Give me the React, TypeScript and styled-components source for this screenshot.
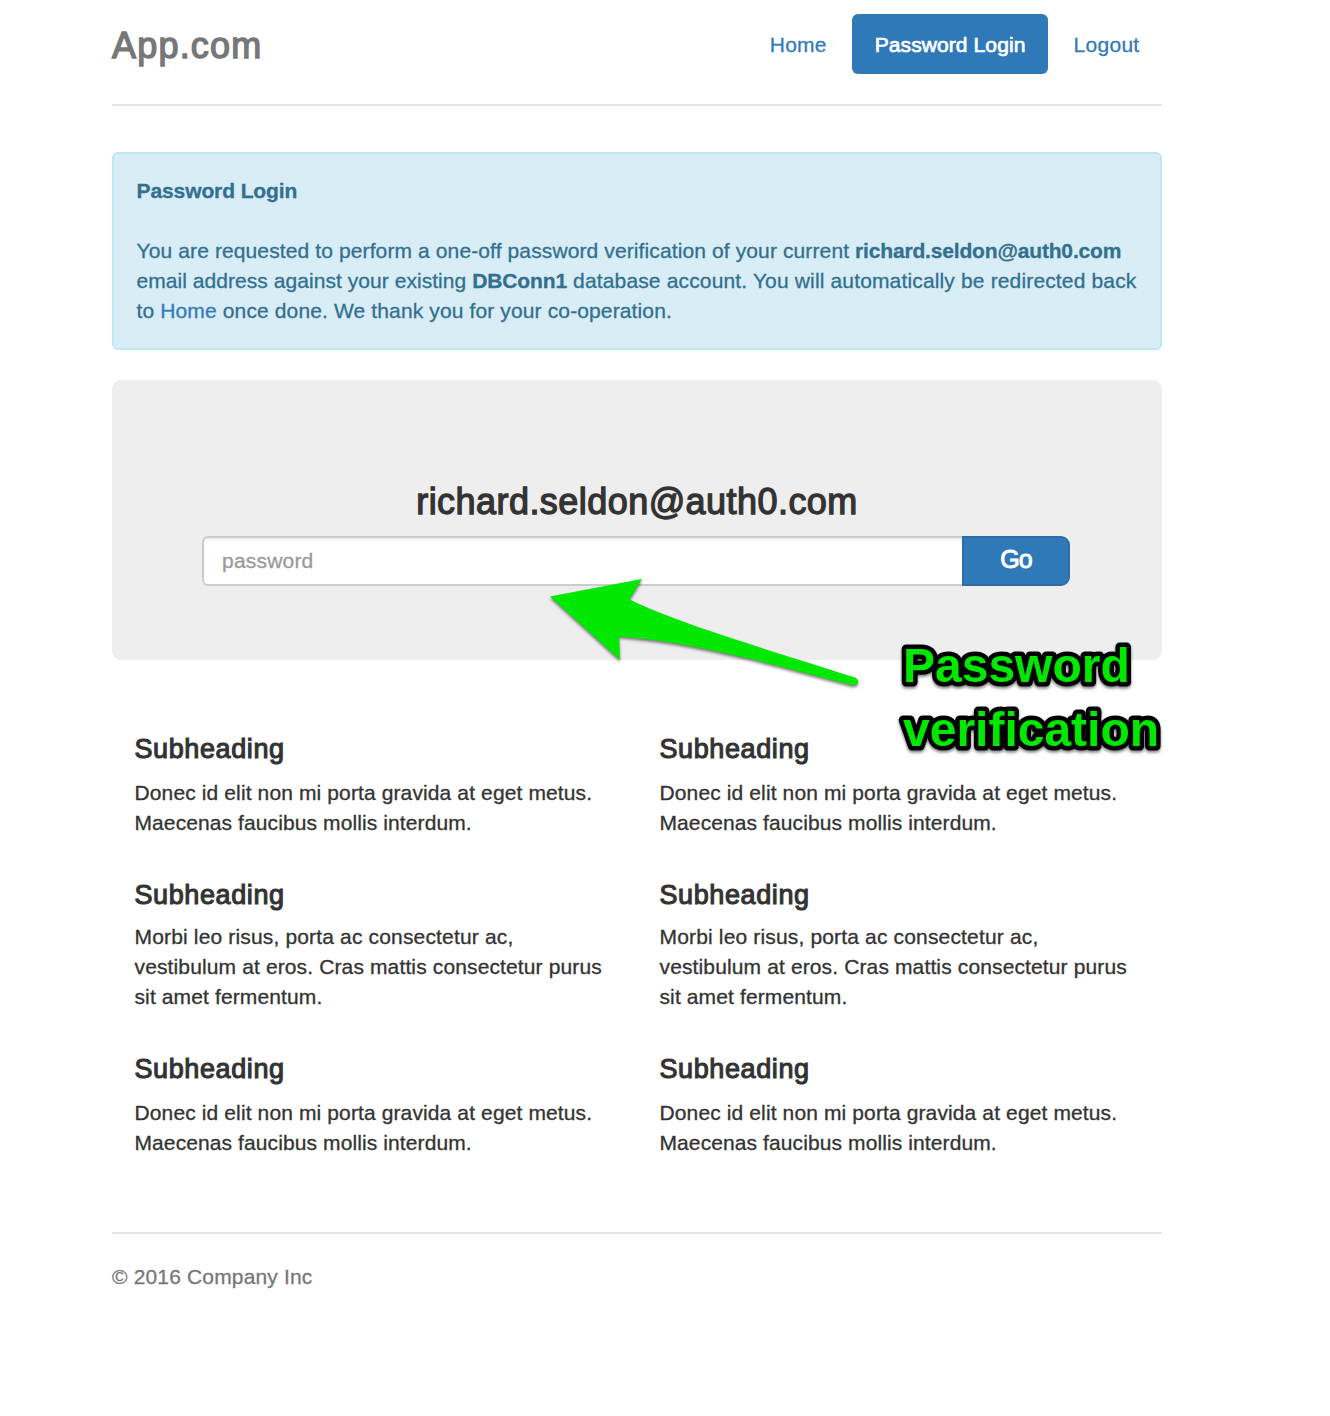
import React from "react";
import styled, { createGlobalStyle } from "styled-components";

const GlobalStyle = createGlobalStyle`
  *, *::before, *::after { box-sizing: border-box; }
  body {
    margin: 0;
    background: #fff;
    color: #333;
    font-family: "Liberation Sans", "Helvetica Neue", Helvetica, Arial, sans-serif;
    font-size: 21px;
    line-height: 30px;
  }
  a { text-decoration: none; }
`;

const Page = styled.div`
  position: relative;
  width: 1330px;
  height: 1416px;
  padding: 14px 168px 0 112px;
  overflow: hidden;
`;

const Header = styled.header`
  display: flex;
  justify-content: space-between;
  height: 92px;
  border-bottom: 2px solid #e5e5e5;
`;

const Brand = styled.h3`
  margin: 2px 0 0;
  height: 60px;
  font-size: 36px;
  line-height: 60px;
  font-weight: 400;
  letter-spacing: 1.2px;
  color: #777;
  -webkit-text-stroke: 1.4px #777;
`;

const Nav = styled.nav`
  display: flex;
  gap: 3px;
  height: 60px;
`;

const NavLink = styled.a<{ $active?: boolean; $spacing: number }>`
  padding: 16px 22.5px 14px;
  border-radius: 6px;
  white-space: nowrap;
  letter-spacing: ${(p) => p.$spacing}px;
  color: ${(p) => (p.$active ? "#fff" : "#337ab7")};
  background: ${(p) => (p.$active ? "#2f79b9" : "transparent")};
  -webkit-text-stroke: ${(p) => (p.$active ? "0.7px #fff" : "0.3px #337ab7")};
`;

const Alert = styled.section`
  height: 198px;
  margin-top: 46px;
  padding: 22px 22.5px;
  border: 2px solid #bce8f1;
  border-radius: 6px;
  background: #d9edf7;
  color: #31708f;
  -webkit-text-stroke: 0.3px;
`;

const Line = styled.div<{ $spacing?: number }>`
  height: 30px;
  white-space: nowrap;
  letter-spacing: ${(p) => p.$spacing ?? 0}px;
`;

const Run = styled.span<{ $spacing: number }>`
  letter-spacing: ${(p) => p.$spacing}px;
`;

const Strong = styled.strong<{ $spacing: number }>`
  letter-spacing: ${(p) => p.$spacing}px;
`;

const AlertTitle = styled.strong`
  display: block;
  margin-bottom: 30px;
  letter-spacing: -0.1px;
`;

const Link = styled.a`
  color: #337ab7;
  -webkit-text-stroke-color: #337ab7;
`;

const Jumbotron = styled.section`
  height: 280px;
  margin-top: 30px;
  padding: 102px 92px 0 90px;
  border-radius: 9px;
  background: #eee;
`;

const Account = styled.h3`
  margin: 0 0 14px;
  padding-left: 2px;
  font-size: 36px;
  line-height: 40px;
  font-weight: 400;
  letter-spacing: 0.45px;
  text-align: center;
  -webkit-text-stroke: 1.3px #333;
`;

const InputGroup = styled.form`
  display: flex;
  height: 50px;
`;

const PasswordInput = styled.input`
  flex: 1;
  min-width: 0;
  padding: 0 18px;
  border: 2px solid #ccc;
  border-right: 0;
  border-radius: 6px 0 0 6px;
  background: #fff;
  box-shadow: inset 0 2px 2px rgba(0, 0, 0, 0.075);
  font: inherit;
  letter-spacing: 0.2px;
  &::placeholder {
    color: #999;
    opacity: 1;
    -webkit-text-stroke: 0.3px #999;
  }
`;

const GoButton = styled.button`
  width: 108px;
  padding: 0 0 4px;
  border: 2px solid #2e6da4;
  border-radius: 0 9px 9px 0;
  background: #2f79b9;
  color: #fff;
  font-family: inherit;
  font-size: 25px;
  letter-spacing: -1px;
  -webkit-text-stroke: 0.9px #fff;
`;

const Marketing = styled.section`
  display: grid;
  grid-template-columns: 1fr 1fr;
  height: 512px;
  margin-top: 60px;
`;

const Column = styled.div`
  padding: 14px 0 0 22.5px;
`;

const Entry = styled.article<{ $gap: number }>`
  margin-bottom: ${(p) => p.$gap}px;
`;

const Subheading = styled.h4<{ $gap: number }>`
  margin: 0 0 ${(p) => p.$gap}px;
  font-size: 27px;
  line-height: 30px;
  font-weight: 400;
  letter-spacing: 0.6px;
  -webkit-text-stroke: 1.1px #333;
`;

const Copy = styled.div`
  -webkit-text-stroke: 0.3px #333;
`;

const Footer = styled.footer`
  padding-top: 28px;
  border-top: 2px solid #e5e5e5;
  color: #777;
  letter-spacing: 0.16px;
  -webkit-text-stroke: 0.3px #777;
`;

const Arrow = styled.svg`
  position: absolute;
  left: 530px;
  top: 560px;
  filter: drop-shadow(0 2px 1.5px rgba(0, 0, 0, 0.5));
`;

const Callout = styled.svg`
  position: absolute;
  left: 890px;
  top: 630px;
  filter: drop-shadow(0 2px 1.5px rgba(0, 0, 0, 0.5));
`;

const CalloutText = styled.text`
  fill: #00e800;
  stroke: #000;
  stroke-width: 9px;
  stroke-linejoin: round;
  paint-order: stroke fill;
  font-size: 48px;
  font-weight: 700;
`;

type CopyLine = { text: string; spacing: number };
type Item = { lines: CopyLine[]; headGap: number; gap: number };

const donec: CopyLine[] = [
  { text: "Donec id elit non mi porta gravida at eget metus.", spacing: 0.12 },
  { text: "Maecenas faucibus mollis interdum.", spacing: 0.1 },
];
const morbi: CopyLine[] = [
  { text: "Morbi leo risus, porta ac consectetur ac,", spacing: 0.16 },
  { text: "vestibulum at eros. Cras mattis consectetur purus", spacing: 0.13 },
  { text: "sit amet fermentum.", spacing: 0.12 },
];
const items: Item[] = [
  { lines: donec, headGap: 14, gap: 42 },
  { lines: morbi, headGap: 12, gap: 42 },
  { lines: donec, headGap: 14, gap: 0 },
];

export default function App() {
  return (
    <Page>
      <GlobalStyle />
      <Header>
        <Brand>App.com</Brand>
        <Nav>
          <NavLink href="#" $spacing={0.2}>Home</NavLink>
          <NavLink href="#" $active $spacing={0.1}>Password Login</NavLink>
          <NavLink href="#" $spacing={0.3}>Logout</NavLink>
        </Nav>
      </Header>
      <Alert>
        <AlertTitle>Password Login</AlertTitle>
        <Line $spacing={0.115}>
          You are requested to perform a one-off password verification of your current{" "}
          <Strong $spacing={-0.17}>richard.seldon@auth0.com</Strong>
        </Line>
        <Line $spacing={0.05}>
          email address against your existing <Strong $spacing={-0.1}>DBConn1</Strong>
          <Run $spacing={0.15}> database account. You will automatically be redirected back</Run>
        </Line>
        <Line $spacing={0.13}>
          to <Link href="#">Home</Link> once done. We thank you for your co-operation.
        </Line>
      </Alert>
      <Jumbotron>
        <Account>richard.seldon@auth0.com</Account>
        <InputGroup>
          <PasswordInput type="password" placeholder="password" />
          <GoButton type="button">Go</GoButton>
        </InputGroup>
      </Jumbotron>
      <Marketing>
        {[0, 1].map((col) => (
          <Column key={col}>
            {items.map((item, i) => (
              <Entry key={i} $gap={item.gap}>
                <Subheading $gap={item.headGap}>Subheading</Subheading>
                <Copy>
                  {item.lines.map((line) => (
                    <Line key={line.text} $spacing={line.spacing}>{line.text}</Line>
                  ))}
                </Copy>
              </Entry>
            ))}
          </Column>
        ))}
      </Marketing>
      <Footer>© 2016 Company Inc</Footer>
      <Arrow width="350" height="140" viewBox="0 0 350 140" aria-hidden="true">
        <path
          d="M20 36.5L112 19L99.5 39.5C150 64 230 87 325 117.5Q329 119.500 328 123Q326 126 321 125C240 104 165 82 89 76.5L90 100Z"
          fill="#00e800"
        />
      </Arrow>
      <Callout width="280" height="130" viewBox="0 0 280 130">
        <CalloutText x="13" y="52">Password</CalloutText>
        <CalloutText x="13" y="116">verification</CalloutText>
      </Callout>
    </Page>
  );
}
